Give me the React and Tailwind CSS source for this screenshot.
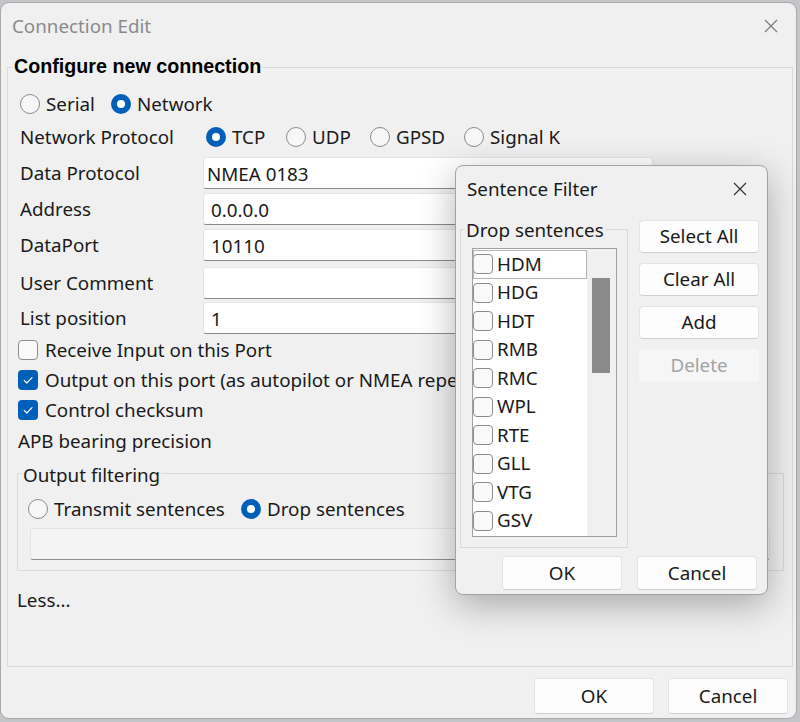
import React from "react";

function Radio({ checked }) {
  return checked ? (
    <span className="w-[20px] h-[20px] rounded-full bg-[#005fb8] flex items-center justify-center shrink-0">
      <span className="w-[8px] h-[8px] rounded-full bg-white" />
    </span>
  ) : (
    <span className="w-[20px] h-[20px] rounded-full border border-[#8a8a8a] bg-[#f7f7f7] shrink-0" />
  );
}

function Check({ checked }) {
  return checked ? (
    <span className="w-[20px] h-[20px] rounded-[4px] bg-[#005fb8] flex items-center justify-center shrink-0">
      <svg width="20" height="20" viewBox="0 0 20 20">
        <polyline points="6.2,10.4 8.8,13 14,7.6" fill="none" stroke="white" strokeWidth="1.2" strokeLinecap="round" strokeLinejoin="round" />
      </svg>
    </span>
  ) : (
    <span className="w-[20px] h-[20px] rounded-[4px] border border-[#8d8d8d] bg-[#f9f9f9] shrink-0" />
  );
}

function CloseX({ color }) {
  return (
    <svg width="14" height="14" viewBox="0 0 14 14" className="shrink-0">
      <path d="M1 1 L13 13 M13 1 L1 13" stroke={color} strokeWidth="1.2" fill="none" />
    </svg>
  );
}

function Btn({ children, className = "" }) {
  return (
    <div className={"flex items-center justify-center rounded-[4px] bg-[#fdfdfd] border border-[#e3e3e3] border-b-[#cfcfcf] text-[#1a1a1a] " + className}>
      {children}
    </div>
  );
}

function InputRow({ label, value, mt, pl = "pl-[7px]" }) {
  return (
    <div className={"flex items-center pl-[12px] " + mt}>
      <span className="w-[183px]">{label}</span>
      <div className={"w-[450px] h-[32px] bg-white border border-[#e5e5e5] border-b-[#8a8a8a] rounded-[3px] flex items-center pt-[3px] " + pl}>
        {value}
      </div>
    </div>
  );
}

const sentences = ["HDM", "HDG", "HDT", "RMB", "RMC", "WPL", "RTE", "GLL", "VTG", "GSV"];

export default function App() {
  return (
    <div className="w-[800px] h-[722px] bg-[#c3c5c8] relative overflow-hidden pt-[3px] pl-[1px] font-['Noto_Sans',sans-serif] text-[18.8px] leading-none text-[#1a1a1a]">
      <div className="w-[795px] h-[715px] bg-[#f0f0f0] rounded-[8px] shadow-[0_0_0_1px_#a9a9a9] flex flex-col">
        <div className="h-[46px] flex items-center justify-between pl-[11px] pr-[18px]">
          <span className="text-[#8a8a8a]">Connection Edit</span>
          <CloseX color="#7a7a7a" />
        </div>

        <div className="mt-[18px] ml-[6px] w-[786px] h-[600px] border border-[#dadada] flex flex-col">
          <div className="ml-[5px] -mt-[12px] h-[22px] px-[1px] w-fit bg-[#f0f0f0] flex items-center font-['Liberation_Sans',Arial,sans-serif] font-bold text-[19.7px] text-black">
            Configure new connection
          </div>

          <div className="mt-[12px] h-[28px] pl-[12px] flex items-center">
            <div className="w-[91px] flex items-center gap-[6px]"><Radio /><span>Serial</span></div>
            <div className="flex items-center gap-[6px]"><Radio checked /><span>Network</span></div>
          </div>

          <div className="mt-[5px] h-[28px] pl-[12px] flex items-center">
            <span className="w-[186px]">Network Protocol</span>
            <div className="w-[80px] flex items-center gap-[6px]"><Radio checked /><span>TCP</span></div>
            <div className="w-[84px] flex items-center gap-[6px]"><Radio /><span>UDP</span></div>
            <div className="w-[94px] flex items-center gap-[6px]"><Radio /><span>GPSD</span></div>
            <div className="flex items-center gap-[6px]"><Radio /><span>Signal K</span></div>
          </div>

          <InputRow label="Data Protocol" value="NMEA 0183" mt="mt-[6px]" pl="pl-[3px]" />
          <InputRow label="Address" value="0.0.0.0" mt="mt-[4px]" />
          <InputRow label="DataPort" value="10110" mt="mt-[4px]" />
          <InputRow label="User Comment" value="" mt="mt-[6px]" />
          <InputRow label="List position" value="1" mt="mt-[3px]" />

          <div className="mt-[2px] h-[28px] pl-[10px] flex items-center gap-[7px]"><Check /><span>Receive Input on this Port</span></div>
          <div className="mt-[2px] h-[28px] pl-[10px] flex items-center gap-[7px]"><Check checked /><span>Output on this port (as autopilot or NMEA repeater)</span></div>
          <div className="mt-[2px] h-[28px] pl-[10px] flex items-center gap-[7px]"><Check checked /><span>Control checksum</span></div>
          <div className="mt-[3px] h-[28px] pl-[10px] flex items-center"><span>APB bearing precision</span></div>

          <div className="mt-[18px] ml-[9px] w-[767px] border border-[#dadada] flex flex-col pb-[10px]">
            <div className="ml-[4px] -mt-[11px] h-[24px] px-[1px] w-fit bg-[#f0f0f0] flex items-center">Output filtering</div>
            <div className="mt-[8px] h-[28px] pl-[10px] flex items-center">
              <div className="w-[213px] flex items-center gap-[6px]"><Radio /><span>Transmit sentences</span></div>
              <div className="flex items-center gap-[6px]"><Radio checked /><span>Drop sentences</span></div>
            </div>
            <div className="mt-[5px] ml-[12px] w-[740px] h-[32px] bg-[#f4f4f4] border border-[#e3e3e3] border-b-[#8f8f8f] rounded-[3px]" />
          </div>

          <div className="mt-[17px] h-[24px] pl-[9px] flex items-center">Less...</div>
        </div>

        <div className="mt-[11px] flex justify-end gap-[14px] pr-[8px]">
          <Btn className="w-[120px] h-[36px]">OK</Btn>
          <Btn className="w-[120px] h-[36px]">Cancel</Btn>
        </div>
      </div>

      <div className="absolute left-[455px] top-[165px] w-[313px] h-[430px] rounded-[8px] bg-[#f0f0f0] border border-[#a3a3a3] shadow-[0_10px_36px_rgba(0,0,0,0.3)] flex flex-col">
        <div className="h-[46px] flex items-center justify-between pl-[11px] pr-[20px]">
          <span>Sentence Filter</span>
          <CloseX color="#333333" />
        </div>
        <div className="flex items-start">
          <div className="mt-[17px] ml-[4px] w-[168px] h-[319px] border border-[#dadada] flex flex-col">
            <div className="ml-[4px] -mt-[12px] h-[24px] px-[1px] w-fit bg-[#f0f0f0] flex items-center">Drop sentences</div>
            <div className="mt-[6px] ml-[11px] w-[145px] h-[289px] border border-[#a0a0a0] bg-white flex">
              <div className="w-[114px] pt-[1px] flex flex-col">
                {sentences.map((s, i) => (
                  <div key={s} className={"h-[28.5px] shrink-0 flex items-center gap-[4px] " + (i === 0 ? "outline outline-1 outline-[#b4b4b4] -outline-offset-1" : "")}>
                    <Check />
                    <span>{s}</span>
                  </div>
                ))}
              </div>
              <div className="w-[29px] bg-[#f0f0f0] pt-[29px] pl-[5px]">
                <div className="w-[18px] h-[95px] bg-[#8a8a8a]" />
              </div>
            </div>
          </div>
          <div className="mt-[8px] ml-[11px] w-[120px] flex flex-col gap-[10px]">
            <Btn className="h-[33px]">Select All</Btn>
            <Btn className="h-[33px]">Clear All</Btn>
            <Btn className="h-[33px]">Add</Btn>
            <div className="h-[33px] rounded-[4px] bg-[#f6f6f6] flex items-center justify-center text-[#a3a3a3]">Delete</div>
          </div>
        </div>
        <div className="mt-[8px] flex justify-end gap-[15px] pr-[10px]">
          <Btn className="w-[120px] h-[34px]">OK</Btn>
          <Btn className="w-[120px] h-[34px]">Cancel</Btn>
        </div>
      </div>
    </div>
  );
}
